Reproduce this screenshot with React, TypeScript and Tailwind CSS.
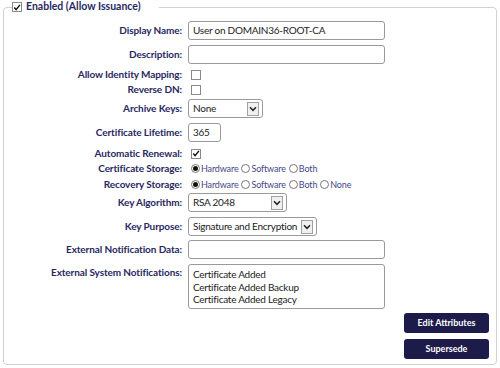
import React from 'react';

const font = "font-['Lato','Liberation_Sans',sans-serif]";

const Box = ({ checked = false }: { checked?: boolean }) => (
  <span className="ml-[3px] w-[10px] h-[10px] border border-[#8a8a8a] bg-white flex items-center justify-center">
    {checked && (
      <svg width="9" height="9" viewBox="0 0 9 9">
        <path d="M1.5 4.5 L3.5 7 L7.8 1.5" stroke="#111" strokeWidth="1.6" fill="none" />
      </svg>
    )}
  </span>
);

const Radio = ({ label, on = false }: { label: string; on?: boolean }) => (
  <span className="flex items-center">
    <span className="w-[9px] h-[9px] rounded-full border border-[#777] bg-white flex items-center justify-center">
      {on && <span className="w-[5px] h-[5px] rounded-full bg-[#111]" />}
    </span>
    <span className="ml-[1px] mr-[3px] text-[9px] tracking-[-0.15px] text-[#46468a]">{label}</span>
  </span>
);

const Chevron = () => (
  <span className="ml-auto mr-[3px] w-[12px] h-[14px] border border-[#a0a0a0] bg-[#f0f0f0] flex items-center justify-center">
    <svg width="8" height="6" viewBox="0 0 8 6">
      <path d="M1 1.2 L4 4.3 L7 1.2" stroke="#222" strokeWidth="1.5" fill="none" />
    </svg>
  </span>
);

const Select = ({ value, w }: { value: string; w: string }) => (
  <div className={`${w} h-[19px] border border-[#9a9a9a] rounded-[3px] bg-white flex items-center pl-[4px] text-[10px] tracking-[-0.25px] text-[#222] whitespace-nowrap`}>
    <span>{value}</span>
    <Chevron />
  </div>
);

const Input = ({ value = '', w = 'w-[197px]' }: { value?: string; w?: string }) => (
  <div className={`${w} h-[19px] border border-[#9a9a9a] rounded-[3px] bg-white flex items-center pl-[4px] text-[10px] tracking-[-0.25px] text-[#222] whitespace-nowrap`}>
    {value}
  </div>
);

const Row = ({ label, h, mt, top = false, children }: { label: string; h: string; mt: string; top?: boolean; children: React.ReactNode }) => (
  <div className={`flex ${h} ${mt} ${top ? 'items-start' : 'items-center'}`}>
    <div className={`w-[178px] text-right text-[10px] tracking-[-0.1px] font-bold text-[#28285f] whitespace-nowrap ${top ? 'pt-[1px]' : ''}`}>{label}</div>
    <div className="ml-[6px] flex items-center">{children}</div>
  </div>
);

export default function App() {
  return (
    <div className={`w-[500px] h-[368px] bg-white ${font}`}>
      <fieldset className="mx-[3px] h-[365px] border border-[#d2d2d2] rounded-[4px]">
        <legend className="ml-[8px] pr-[18px] flex items-center h-[14px]">
          <span className="w-[10px] h-[10px] border border-[#8a8a8a] bg-white flex items-center justify-center">
            <svg width="9" height="9" viewBox="0 0 9 9">
              <path d="M1.5 4.5 L3.5 7 L7.8 1.5" stroke="#111" strokeWidth="1.6" fill="none" />
            </svg>
          </span>
          <span className="ml-[4px] text-[10.5px] font-bold text-[#28285f]">Enabled (Allow Issuance)</span>
        </legend>

        <Row label="Display Name:" h="h-[19px]" mt="mt-[7px]">
          <Input value="User on DOMAIN36-ROOT-CA" />
        </Row>
        <Row label="Description:" h="h-[19px]" mt="mt-[5px]">
          <Input />
        </Row>
        <Row label="Allow Identity Mapping:" h="h-[15px]" mt="mt-[3px]">
          <Box />
        </Row>
        <Row label="Reverse DN:" h="h-[15px]" mt="mt-0">
          <Box />
        </Row>
        <Row label="Archive Keys:" h="h-[19px]" mt="mt-[2px]">
          <Select value="None" w="w-[75px]" />
        </Row>
        <Row label="Certificate Lifetime:" h="h-[19px]" mt="mt-[5px]">
          <Input value="365" w="w-[33px]" />
        </Row>
        <Row label="Automatic Renewal:" h="h-[15px]" mt="mt-[4px]">
          <Box checked />
        </Row>
        <Row label="Certificate Storage:" h="h-[15px]" mt="mt-0">
          <span className="ml-[3px] flex items-center">
            <Radio label="Hardware" on />
            <Radio label="Software" />
            <Radio label="Both" />
          </span>
        </Row>
        <Row label="Recovery Storage:" h="h-[15px]" mt="mt-[1px]">
          <span className="ml-[3px] flex items-center">
            <Radio label="Hardware" on />
            <Radio label="Software" />
            <Radio label="Both" />
            <Radio label="None" />
          </span>
        </Row>
        <Row label="Key Algorithm:" h="h-[19px]" mt="mt-[1px]">
          <Select value="RSA 2048" w="w-[99px]" />
        </Row>
        <Row label="Key Purpose:" h="h-[19px]" mt="mt-[5px]">
          <Select value="Signature and Encryption" w="w-[129px]" />
        </Row>
        <Row label="External Notification Data:" h="h-[19px]" mt="mt-[4px]">
          <Input />
        </Row>
        <Row label="External System Notifications:" h="h-[45px]" mt="mt-[5px]" top>
          <div className="w-[197px] h-[45px] border border-[#9a9a9a] rounded-[3px] bg-white pl-[4px] pt-[3px] text-[10px] tracking-[-0.25px] leading-[12.5px] text-[#222]">
            <div>Certificate Added</div>
            <div>Certificate Added Backup</div>
            <div>Certificate Added Legacy</div>
          </div>
        </Row>

        <div className="flex flex-col items-end pr-[7px] mt-[4px] gap-[6px]">
          <button className="w-[85px] h-[20px] rounded-[3px] bg-[#1c1b49] text-white text-[9px] font-bold">Edit Attributes</button>
          <button className="w-[85px] h-[20px] rounded-[3px] bg-[#1c1b49] text-white text-[9px] font-bold">Supersede</button>
        </div>
      </fieldset>
    </div>
  );
}
